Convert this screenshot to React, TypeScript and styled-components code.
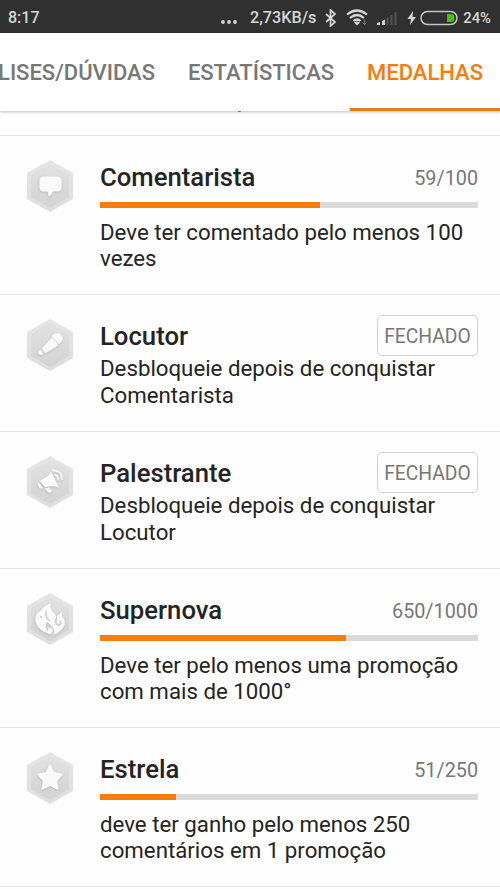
import React from 'react';
import styled, { createGlobalStyle } from 'styled-components';

const GlobalStyle = createGlobalStyle`
  * { box-sizing: border-box; }
  body { margin: 0; background: #fefefe; font-family: Roboto, "Noto Sans", sans-serif; color: #242424; }
`;

const Screen = styled.main`
  width: 500px;
  height: 889px;
  overflow: hidden;
  background: #fefefe;
`;

const StatusBar = styled.header`
  height: 33px;
  background: #303030;
  color: #d6d6d6;
  display: flex;
  align-items: center;
  padding: 2px 9px 0 8px;
  font-size: 16px;
  font-weight: 500;
  line-height: 20px;
  white-space: nowrap;
`;

const Clock = styled.span`
  flex: 1;
`;

const NetworkSpeed = styled.span`
  width: 67px;
  margin-left: 13px;
  font-size: 16.2px;
`;

const Battery = styled.span`
  width: 28px;
  margin-left: 5px;
  display: flex;
  justify-content: flex-end;
  font-size: 14.8px;
`;

const StatusIcon = styled.svg<{ $gap?: number }>`
  display: block;
  flex: none;
  margin-left: ${({ $gap = 0 }) => $gap}px;
`;

const TabBar = styled.nav`
  height: 78px;
  display: flex;
  background: #fff;
  box-shadow: 0 1px 3px rgba(0, 0, 0, 0.25);
  position: relative;
  z-index: 1;
`;

const Tab = styled.a<{ $width: number; $active?: boolean; $trailing?: number }>`
  width: ${({ $width }) => $width}px;
  flex: none;
  display: flex;
  align-items: center;
  justify-content: ${({ $trailing }) => ($trailing ? 'flex-end' : 'center')};
  padding-top: ${({ $active }) => ($active ? 4 : 1)}px;
  padding-right: ${({ $trailing = 0 }) => $trailing}px;
  border-bottom: ${({ $active }) => ($active ? '3px solid #e77b16' : '0')};
  color: ${({ $active }) => ($active ? '#fb7a09' : '#777')};
  font-size: 22px;
  font-weight: 500;
  white-space: nowrap;
`;

const PreviousRow = styled.div`
  height: 25px;
  border-bottom: 1px solid #e6e6e6;
`;

const ClippedDescender = styled.div`
  width: 3px;
  height: 1px;
  margin-left: 238px;
  background: #777;
  position: relative;
  z-index: 2;
`;

const MedalRow = styled.article<{ $height: number }>`
  height: ${({ $height }) => $height}px;
  display: flex;
  padding: 24px 22px 0 26px;
  border-bottom: 1px solid #e6e6e6;
`;

const MedalIcon = styled.svg`
  width: 48px;
  height: 52px;
  margin-right: 26px;
  flex: none;
`;

const MedalBody = styled.div`
  flex: 1;
  min-width: 0;
`;

const MedalHeading = styled.div`
  height: 35px;
  display: flex;
  justify-content: space-between;
  align-items: flex-start;
`;

const MedalTitle = styled.h2`
  margin: 0;
  font-size: 25.7px;
  font-weight: 500;
  line-height: 35px;
`;

const Score = styled.span`
  font-size: 19.8px;
  line-height: 37px;
  color: #777;
`;

const LockedBadge = styled.span`
  width: 101px;
  height: 41px;
  flex: none;
  border: 1px solid #d2d2d2;
  border-radius: 5px;
  color: #777;
  font-size: 19.3px;
  display: flex;
  align-items: center;
  justify-content: center;
  padding-top: 2px;
  margin-top: -4px;
`;

const Track = styled.div`
  height: 6px;
  margin: 7px 0 11px;
  background: #dadada;
`;

const Fill = styled.div`
  height: 6px;
  background: #f77e0c;
`;

const Description = styled.p<{ $locked: boolean }>`
  margin: ${({ $locked }) => ($locked ? 1.4 : -0.5)}px 0 0;
  font-size: 22.25px;
  line-height: 26.4px;
  white-space: nowrap;
`;

const Line = styled.span`
  display: block;
`;

type Kind = 'comment' | 'microphone' | 'megaphone' | 'flame' | 'star';

function Emblem({ kind }: { kind: Kind }) {
  switch (kind) {
    case 'comment':
      return <path d="M18 16.500h13q4.500 0 4.500 4.500v6q0 4.500-4.500 4.500h-4q-1 3.500-4.500 5 0-2.500-1-5H18q-4.500 0-4.500-4.500v-6q0-4.500 4.500-4.500Z" />;
    case 'microphone':
      return (
        <g>
          <path d="m25.500 19 6.500 7.500-12 7.500q-3-1-4-5Z" />
          <path d="m14.500 30.500 3 4-2 1.500q-3 0-3.500-3Z" />
          <circle cx="31" cy="19.500" r="5.500" />
          <path d="m26 17.500 7.500 9" fill="none" stroke="#d4d4d4" strokeWidth="1" />
        </g>
      );
    case 'megaphone':
      return (
        <g>
          <path d="m25 15.500 8 16q-5-2-10-1l-4 .5-5-6 6-4q4-2 5-5.500Z" />
          <path d="m13 26.500 3.500 5.500-2.500.5-2.500-4Zm6 6 4-1 3 3.500-3 2Z" />
          <path d="M28.500 19q3-1 4 5M26 14.500q10-1 10 9.500" fill="none" stroke="#f4f4f4" strokeWidth="2" />
        </g>
      );
    case 'flame':
      return (
        <g>
          <path d="M25 10q-2 5 3 10 4 4 0 9 4-1 3-6 4-3 5-5-1 5 2 8 2 6-2 10-4 5-10 6 4-3 1-7-2-3-6-6-3 4 1 11-9-2-12-10-2-6 2-11 0 6 4 6-3-8 2-11 4-3 7-4Z" />
          <path d="m15 17-4 4 2 4 4-4Z" />
          <path d="m20 18q-1 7 4 10M30 26q-1 6 3 6 3-1 1-4" fill="none" stroke="#d2d2d2" strokeWidth="1.800" />
          <path d="M23 34q6 2 3 6-3 3-5-1Z" />
        </g>
      );
    case 'star':
      return <path strokeLinejoin="round" strokeWidth="2" stroke="#fafafa" d="m24 13.500 3.500 7.500 8 1.500-5.500 6 1.500 8-7.500-3.700-7.500 3.700 1.500-8-5.500-6 8-1.500Z" />;
  }
}

function Medal({ kind }: { kind: Kind }) {
  return (
    <MedalIcon viewBox="0 0 48 52" aria-hidden="true">
      <defs>
        <linearGradient id={`outer-${kind}`} x1="0" x2="0" y1="0" y2="1">
          <stop stopColor="#e6e6e6" />
          <stop offset="1" stopColor="#dedede" />
        </linearGradient>
        <linearGradient id={`inner-${kind}`} x1="0" x2="0" y1="0" y2="1">
          <stop stopColor="#e2e2e2" />
          <stop offset="1" stopColor="#d3d3d3" />
        </linearGradient>
        <filter id={`shadow-${kind}`} x="-20%" y="-20%" width="140%" height="150%">
          <feDropShadow dx="-.3" dy=".8" stdDeviation="1" floodColor="#888" floodOpacity=".45" />
        </filter>
      </defs>
      <path d="m24 0 23 13v26L24 52 1 39V13Z" fill={`url(#outer-${kind})`} />
      <path d="m24 4 19 11v22L24 48 5 37V15Z" fill={`url(#inner-${kind})`} />
      <g fill="#fafafa" filter={`url(#shadow-${kind})`}><Emblem kind={kind} /></g>
    </MedalIcon>
  );
}

const medals: { kind: Kind; title: string; score?: string; progress?: number; height: number; lines: string[] }[] = [
  { kind: 'comment', title: 'Comentarista', score: '59/100', progress: 58.1, height: 159, lines: ['Deve ter comentado pelo menos 100', 'vezes'] },
  { kind: 'microphone', title: 'Locutor', height: 137, lines: ['Desbloqueie depois de conquistar', 'Comentarista'] },
  { kind: 'megaphone', title: 'Palestrante', height: 137, lines: ['Desbloqueie depois de conquistar', 'Locutor'] },
  { kind: 'flame', title: 'Supernova', score: '650/1000', progress: 65, height: 159, lines: ['Deve ter pelo menos uma promoção', 'com mais de 1000°'] },
  { kind: 'star', title: 'Estrela', score: '51/250', progress: 20, height: 159, lines: ['deve ter ganho pelo menos 250', 'comentários em 1 promoção'] },
];

export default function App() {
  return (
    <Screen>
      <GlobalStyle />
      <StatusBar>
        <Clock>8:17</Clock>
        <StatusIcon width="17" height="20" fill="#d6d6d6"><circle cx="3" cy="14" r="1.900" /><circle cx="9" cy="14" r="1.900" /><circle cx="15" cy="14" r="1.900" /></StatusIcon>
        <NetworkSpeed>2,73KB/s</NetworkSpeed>
        <StatusIcon $gap={8} width="12" height="18" fill="none" stroke="#d6d6d6" strokeWidth="1.700"><path d="m1 5 9 8-4.500 4V1L10 5l-9 8" /></StatusIcon>
        <StatusIcon $gap={9} width="22" height="18" fill="none" stroke="#d6d6d6" strokeWidth="2.200"><path d="M1 5.500Q11-2.500 21 5.500M4 9q7-6 14 0M7.500 12q3.500-3 7 0" /><path d="m8 13.500 3 3 3-3q-3-2-6 0Z" fill="#d6d6d6" stroke="none" /><path d="M18.500 10.500v5m-2-2 2 2 2-2" stroke="#777" strokeWidth="1" /></StatusIcon>
        <StatusIcon $gap={9} width="21" height="16"><path d="M0 15v-2l3-1v3Zm5 0v-4l3-1.500V15Z" fill="#d6d6d6" /><path d="M9.500 15V7.500h2V15Zm4 0V5h2v10Zm4 0V2h2v13Z" fill="#555" /></StatusIcon>
        <StatusIcon $gap={9} width="9" height="16" fill="#d6d6d6"><path d="M6 1 .5 9H4l-1 6 6-8H5.500L6 1Z" /></StatusIcon>
        <StatusIcon $gap={4} width="38" height="16"><rect x="1" y="1.500" width="36" height="13" rx="6.500" fill="none" stroke="#c4c4c4" strokeWidth="1.500" /><path d="M27 4h4q3.500 0 3.500 4T31 12h-4Z" fill="#48bd16" /></StatusIcon>
        <Battery>24%</Battery>
      </StatusBar>
      <TabBar>
        <Tab $width={172} $trailing={17}>LISES/DÚVIDAS</Tab>
        <Tab $width={178}>ESTATÍSTICAS</Tab>
        <Tab $width={150} $active>MEDALHAS</Tab>
      </TabBar>
      <PreviousRow><ClippedDescender /></PreviousRow>
      {medals.map((medal) => (
        <MedalRow key={medal.kind} $height={medal.height}>
          <Medal kind={medal.kind} />
          <MedalBody>
            <MedalHeading>
              <MedalTitle>{medal.title}</MedalTitle>
              {medal.score ? <Score>{medal.score}</Score> : <LockedBadge>FECHADO</LockedBadge>}
            </MedalHeading>
            {medal.progress !== undefined && <Track><Fill style={{ width: `${medal.progress}%` }} /></Track>}
            <Description $locked={!medal.score}>{medal.lines.map((line) => <Line key={line}>{line}</Line>)}</Description>
          </MedalBody>
        </MedalRow>
      ))}
    </Screen>
  );
}
